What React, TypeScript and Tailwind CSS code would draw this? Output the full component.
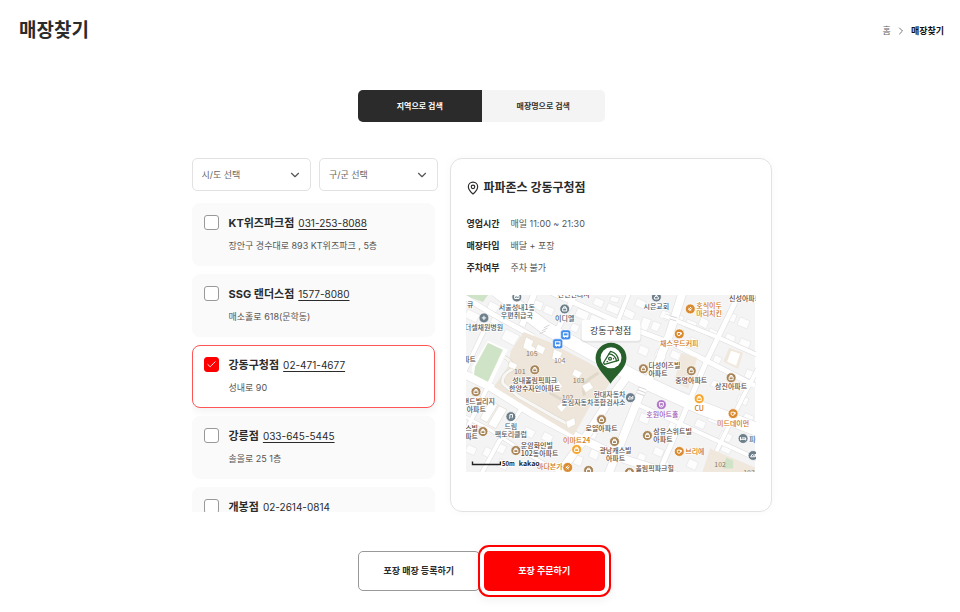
import { useState } from 'react';
import { Check, ChevronDown, ChevronRight, MapPin } from 'lucide-react';

interface Store {
  name: string;
  phone: string;
  address: string;
}

interface Place {
  x: number;
  y: number;
  lines: string[];
  color: string;
  anchor?: 'start' | 'middle' | 'end';
}

interface Poi {
  x: number;
  y: number;
  kind: 'apt' | 'cafe' | 'food' | 'plus' | 'mail' | 'note' | 'church' | 'car' | 'face' | 'bed';
  color: string;
}

const stores: Store[] = [
  { name: 'KT위즈파크점', phone: '031-253-8088', address: '장안구 경수대로 893 KT위즈파크 , 5층' },
  { name: 'SSG 랜더스점', phone: '1577-8080', address: '매소홀로 618(문학동)' },
  { name: '강동구청점', phone: '02-471-4677', address: '성내로 90' },
  { name: '강릉점', phone: '033-645-5445', address: '솔올로 25 1층' },
  { name: '개봉점', phone: '02-2614-0814', address: '개봉로 23길 10' },
];

const details = [
  ['영업시간', '매일 11:00 ~ 21:30'],
  ['매장타입', '배달 + 포장'],
  ['주차여부', '주차 불가'],
];

const brown = '#5a4a42';
const slate = '#4d5b66';
const orange = '#cf7412';
const sand = '#a88558';
const steel = '#6d7f8b';

const places: Place[] = [
  { x: 1, y: 12, lines: ['큐'], color: slate, anchor: 'start' },
  { x: 51, y: 15, lines: ['서울성내1동', '우편취급국'], color: slate },
  { x: 18, y: 35, lines: ['더셀채원병원'], color: slate },
  { x: 108, y: 2, lines: ['천년연리지'], color: brown },
  { x: 99, y: 26, lines: ['이디엘'], color: slate },
  { x: 10, y: 67, lines: ['아파트'], color: brown, anchor: 'end' },
  { x: 69, y: 88, lines: ['성내올림픽파크', '한양수자인아파트'], color: brown },
  { x: 191, y: 14, lines: ['시은교회'], color: slate },
  { x: 231, y: 13, lines: ['호식이두', '마리치킨'], color: orange, anchor: 'start' },
  { x: 264, y: 6, lines: ['신성아파트'], color: brown, anchor: 'start' },
  { x: 214, y: 51, lines: ['채스우드커피'], color: orange },
  { x: 183, y: 73, lines: ['다성이즈빌', '아파트'], color: brown, anchor: 'start' },
  { x: 226, y: 88, lines: ['중명아파트'], color: brown },
  { x: 266, y: 94, lines: ['삼진아파트'], color: brown },
  { x: 160, y: 102, lines: ['현대자동차', '동심자동차종합검사소'], color: slate, anchor: 'end' },
  { x: 29, y: 109, lines: ['랜드빌리지'], color: brown, anchor: 'end' },
  { x: 20, y: 117, lines: ['아파트'], color: brown, anchor: 'end' },
  { x: 45, y: 134, lines: ['드림', '팩토리클럽'], color: slate },
  { x: 12, y: 136, lines: ['캐스빌', '아파트'], color: brown, anchor: 'end' },
  { x: 55, y: 154, lines: ['운암화인빌', '102동아파트'], color: brown, anchor: 'start' },
  { x: 111, y: 148, lines: ['이마트24'], color: orange },
  { x: 97, y: 175, lines: ['바다본가'], color: orange, anchor: 'end' },
  { x: 136, y: 136, lines: ['로얄아파트'], color: brown },
  { x: 150, y: 159, lines: ['광남캐스빌', '아파트'], color: brown },
  { x: 197, y: 122, lines: ['호원아트홀'], color: '#9a55b5' },
  { x: 234, y: 116, lines: ['CU'], color: orange },
  { x: 268, y: 131, lines: ['미드데이먼'], color: orange },
  { x: 188, y: 139, lines: ['삼유스위트빌', '아파트'], color: brown, anchor: 'start' },
  { x: 220, y: 160, lines: ['브리에'], color: orange, anchor: 'start' },
  { x: 284, y: 147, lines: ['피아노'], color: slate, anchor: 'start' },
  { x: 170, y: 177, lines: ['올림픽파크힐'], color: brown, anchor: 'start' },
];

const blocks = [
  { x: 66, y: 61, label: '105' },
  { x: 94, y: 68, label: '104' },
  { x: 54, y: 79, label: '101' },
  { x: 113, y: 88, label: '103' },
  { x: 102, y: 105, label: '102' },
  { x: 255, y: 173, label: '102' },
  { x: 284, y: 181, label: '103' },
];

const pois: Poi[] = [
  { x: 51, y: 2, kind: 'mail', color: steel },
  { x: 18, y: 23, kind: 'plus', color: steel },
  { x: 99, y: 14, kind: 'apt', color: steel },
  { x: 191, y: 2, kind: 'church', color: steel },
  { x: 225, y: 14, kind: 'food', color: '#d98a30' },
  { x: 214, y: 39, kind: 'cafe', color: '#d98a30' },
  { x: 69, y: 75, kind: 'apt', color: sand },
  { x: 178, y: 74, kind: 'apt', color: sand },
  { x: 226, y: 76, kind: 'apt', color: sand },
  { x: 266, y: 83, kind: 'apt', color: sand },
  { x: 165, y: 103, kind: 'car', color: steel },
  { x: 10, y: 97, kind: 'apt', color: sand },
  { x: 45, y: 122, kind: 'note', color: steel },
  { x: 17, y: 137, kind: 'apt', color: sand },
  { x: 50, y: 156, kind: 'apt', color: sand },
  { x: 111, y: 155, kind: 'apt', color: '#f5a52c' },
  { x: 102, y: 173, kind: 'food', color: '#d98a30' },
  { x: 123, y: 176, kind: 'apt', color: sand },
  { x: 136, y: 125, kind: 'apt', color: sand },
  { x: 149, y: 147, kind: 'apt', color: sand },
  { x: 196, y: 110, kind: 'face', color: '#ad75c4' },
  { x: 234, y: 104, kind: 'apt', color: '#f5a52c' },
  { x: 268, y: 119, kind: 'cafe', color: '#d98a30' },
  { x: 182, y: 141, kind: 'apt', color: sand },
  { x: 214, y: 157, kind: 'cafe', color: '#d98a30' },
  { x: 278, y: 144, kind: 'bed', color: steel },
  { x: 288, y: 161, kind: 'car', color: steel },
  { x: 164, y: 178, kind: 'apt', color: sand },
];

const glyphs: Record<Poi['kind'], string> = {
  apt: 'M-2 -.8h4v2.8h-4zM-1 -.8v-1.4h2v1.4',
  cafe: 'M-2 -1.4h3.2v1.6a1.6 1.6 0 0 1 -3.2 0zM1.2 -1h1v1.2h-1',
  food: 'M-2 .8L.8 -2M-1 1.8L2 -.8M-1.8 -.8L1 1.8',
  plus: 'M0 -2.2v4.4M-2.2 0h4.4',
  mail: 'M-2.2 -1.5h4.4v3h-4.4zM-2.2 -1.5l2.2 1.8l2.2 -1.8',
  note: 'M-1 1.5v-3.4l2.6 -.4v3.2M-1.8 1.6h.8M.8 1.2h.8',
  church: 'M0 -2.6v2M-1 -1.8h2M-2 2v-1.8l2 -1.2l2 1.2v1.8z',
  car: 'M-2.4 1.4l1.8 -2.8l1.4 1.6l1.6 -1.6v2.6z',
  face: 'M-2 -2h4v2.4a2 2 0 0 1 -4 0zM-1 -.8h.1M.9 -.8h.1M-.8 .8h1.6',
  bed: 'M-2.6 -1.6v3.4M-2.6 .8h5.2v1M-1.2 -.6h3.8v1.4',
};

const buildings = [
  '2,14 14,20 10,28 -2,22', '24,6 34,11 30,18 21,13', '28,20 35,24 31,31 24,27', '40,34 54,41 48,51 35,44',
  '68,4 78,8 75,16 65,12', '80,10 89,14 86,21 77,17', '112,13 124,18 121,26 109,21', '126,19 137,24 134,32 123,27',
  '107,28 114,31 111,38 104,35', '130,2 139,6 136,13 127,9', '143,8 155,13 152,20 140,15', '160,13 170,18 167,25 157,20',
  '146,1 154,3 152,8 144,6', '172,3 181,7 178,14 169,10', '178,22 186,25 180,40 172,37', '188,26 196,29 192,37 185,34',
  '197,15 205,18 201,26 194,22', '210,18 219,22 216,29 207,25', '222,24 232,28 229,36 219,32', '238,8 247,12 244,18 235,14',
  '249,14 258,18 255,25 246,21', '262,16 272,20 269,28 259,24', '275,22 285,26 282,34 272,30', '236,22 244,26 241,34 233,30',
  '245,33 253,37 250,45 242,41', '226,42 235,46 232,54 223,50', '207,55 216,59 213,66 204,62', '192,54 200,58 197,65 189,61',
  '175,50 184,54 181,62 172,58', '262,38 271,42 268,49 259,45', '276,43 286,47 283,55 273,51', '250,60 257,63 254,70 247,67',
  '282,74 291,78 288,86 279,82', '248,85 257,89 254,95 245,91', '216,96 225,100 222,107 213,103', '246,118 256,122 252,130 242,126',
  '232,124 241,128 238,135 229,131', '257,136 268,141 264,148 253,144', '258,150 267,154 264,160 255,156',
  '218,132 226,136 223,143 215,139', '176,118 185,122 182,130 173,126', '205,126 212,129 209,137 202,134',
  '190,152 199,156 196,163 187,159', '196,165 204,168 201,176 193,172', '224,164 233,168 230,176 221,172',
  '174,158 181,161 178,169 171,165', '126,154 134,158 131,166 123,162', '124,136 132,139 129,145 121,142',
  '79,137 88,142 84,149 75,144', '72,165 80,169 77,176 69,172', '32,148 41,152 37,160 28,156', '20,152 28,156 24,164 16,160',
  '34,164 43,168 40,176 31,172', '60,132 70,137 66,144 57,139', '110,160 118,163 115,172 107,169', '2,150 11,154 8,161 -1,157',
  '274,100 284,104 281,111 271,107', '280,118 289,122 286,130 277,126', '136,108 144,112 141,119 133,115',
];

const towers = [
  '60,42 68,46 66,51 71,54 68,59 57,53', '72,49 80,53 77,60 69,56', '88,54 97,58 95,62 101,65 98,70 86,64',
  '44,66 52,70 49,75 42,72', '79,86 87,90 93,86 97,92 88,98 79,94', '109,74 117,78 113,84 106,80',
  '91,112 98,106 101,112 96,118', '100,127 109,123 110,130 102,134', '116,91 124,87 128,93 120,98',
];

const roads = [
  { d: 'M-5 0L28 20L68 42', w: 5 },
  { d: 'M30 -5L80 33L145 69L180 88L235 113L295 136', w: 13 },
  { d: 'M-5 78L24 92L67 119L117 145L160 165L220 184', w: 8 },
  { d: 'M197 60L174 101L142 182', w: 8 },
  { d: 'M163 80L147 101L117 147L91 182', w: 8 },
  { d: 'M218 -5L204 40L195 62', w: 8 },
  { d: 'M70 -5L56 31', w: 6 },
  { d: 'M112 -5L88 42', w: 5 },
  { d: 'M165 -5L145 45', w: 4 },
  { d: 'M80 -5L170 35L208 49L290 91', w: 5 },
  { d: 'M199 21L254 43L292 60', w: 4 },
  { d: 'M276 -5L241 67L192 182', w: 5 },
  { d: 'M295 70L277 104L239 182', w: 4 },
  { d: 'M168 108L219 131L295 166', w: 4 },
  { d: 'M-5 120L22 134L64 161L103 182', w: 3 },
  { d: 'M22 92L-5 146', w: 4 },
  { d: 'M57 112L33 147L14 182', w: 4 },
  { d: 'M18 36L-4 82', w: 4 },
];

function StoreMap() {
  return (
    <svg
      viewBox="0 0 290 178"
      role="img"
      aria-label="강동구청점 지도"
      className="block h-auto w-full font-['Noto_Sans_CJK_KR',sans-serif]"
    >
      <rect width="290" height="178" fill="#f4f4f5" />
      <path d="M0 0h22l-5 7l-17 -6z" fill="#cfe3c6" />
      <g fill="#fdfdfd" stroke="#e2e2e5" strokeWidth=".6">
        {buildings.map((p) => (
          <polygon key={p} points={p} />
        ))}
      </g>

      {/* road casing first, then the white fill over it */}
      <g fill="none" stroke="#dcdcdf" strokeLinejoin="round">
        {roads.map((r) => (
          <path key={r.d} d={r.d} strokeWidth={r.w + 1} />
        ))}
      </g>
      <g fill="none" stroke="#fff" strokeLinejoin="round">
        {roads.map((r) => (
          <path key={r.d} d={r.d} strokeWidth={r.w} />
        ))}
      </g>

      {/* apartment complex and park */}
      <path d="M58 37L83 47L125 69L147 83L139 97L127 107L108 141L68 117L28 92L42 72L45 56z" fill="#eee6da" />
      <path d="M38 62q9 4 8 13q-11 5 -9 14l16 13l35 20l17 9" fill="none" stroke="#d8d5d0" strokeWidth="4" />
      <path d="M38 62q9 4 8 13q-11 5 -9 14l16 13l35 20l17 9" fill="none" stroke="#f8f7f4" strokeWidth="3" />
      <path d="M119 101q-4 -10 5 -17l9 -6M84 98l12 7l19 4" fill="none" stroke="#e0d8ca" strokeWidth="3" />
      <g fill="#fff" stroke="#e1d8ca" strokeWidth=".6">
        {towers.map((p) => (
          <polygon key={p} points={p} />
        ))}
      </g>
      <path d="M6 72L22 46L42 55L24 91L7 83z" fill="#fff" />
      <path d="M9 72L22 48L37 55L22 87L8 80z" fill="#cfe3c6" />
      <path d="M216 58L232 63L223 94L209 87z" fill="#f0e8dc" />
      <path d="M264 53L278 58L273 74L258 67z" fill="#f0e8dc" />
      <path d="M266 56l9 3l-4 12l-9 -4z" fill="#fff" />
      <path d="M245 154L290 173V178H237z" fill="#f0e8dc" />
      <path d="M261 163l7 3v8h-10z" fill="#cfe3c6" />
      <path d="M33 111l8 4l-11 19l-8 -4zM24 105l8 5l-11 18l-7 -4z" fill="#fff" stroke="#dcd5ca" strokeWidth=".6" />
      <path d="M78 33l6 -3M76 36l6 -3M74 39l6 -3M204 24l7 2M205 21l7 2M173 92l8 3M172 95l8 3M171 98l8 3" stroke="#d6d6da" strokeWidth="1" />

      <g textAnchor="middle" fill="#8b7a67" fontSize="7">
        {blocks.map((b) => (
          <text key={`${b.label}-${b.x}`} x={b.x} y={b.y}>
            {b.label}
          </text>
        ))}
      </g>

      {pois.map((p) => (
        <g key={`${p.x}-${p.y}`} transform={`translate(${p.x} ${p.y})`}>
          <circle r="5" fill={p.color} stroke="#fff" strokeWidth=".8" />
          <path d={glyphs[p.kind]} fill="none" stroke="#fff" strokeWidth="1" strokeLinejoin="round" />
        </g>
      ))}

      {/* bus stops */}
      {[[100, 40], [92, 49]].map(([x, y]) => (
        <g key={x} transform={`translate(${x} ${y})`}>
          <rect x="-5" y="-5" width="10" height="10" rx="2.5" fill="#3f8cec" stroke="#fff" strokeWidth=".6" />
          <path d="M-2.8 -2.6h5.6v4.8h-5.6zM-1.8 2.2h.8v1h-.8zM1 2.2h.8v1h-.8z" fill="#fff" />
          <path d="M-1.8 -1.5h3.6v2h-3.6z" fill="#3f8cec" />
        </g>
      ))}

      <g fontSize="7" fontWeight="500" stroke="#fff" strokeWidth="1.4" strokeLinejoin="round" paintOrder="stroke">
        {places.map((p) => (
          <text key={`${p.x}-${p.y}`} textAnchor={p.anchor ?? 'middle'} fill={p.color}>
            {p.lines.map((line, i) => (
              <tspan key={line} x={p.x} y={p.y + i * 8}>
                {line}
              </tspan>
            ))}
          </text>
        ))}
        <text x="36" y="172" fill="#222" fontWeight="700" fontSize="6">50m</text>
        <text x="53" y="172" fill="#222" fontWeight="700">kakao</text>
      </g>
      <path d="M6.500 167v3h28v-3" fill="none" stroke="#222" strokeWidth="1.4" />

      {/* selected store */}
      <path d="M145 89C141 82 130 74 130 63.500A15.500 15.500 0 0 1 161 63.500C161 74 149 82 145 89z" fill="#28602b" />
      <circle cx="145.500" cy="63" r="10.500" fill="#fff" />
      <g fill="none" stroke="#28602b" strokeWidth="1.300" strokeLinejoin="round" strokeLinecap="round">
        <path d="M138 68L145 56.500Q152 58 153 65.500L139 69.500z" />
        <path d="M143.500 59q6.500 1 7.500 7" />
        <circle cx="144.500" cy="64" r="1.400" />
        <path d="M148 63.500v.5M141.500 67l.5 -.3" />
      </g>
      <rect x="115" y="26" width="61" height="22" rx="4" fill="#000" opacity=".06" />
      <rect x="116" y="25" width="59" height="21" rx="3" fill="#fff" />
      <text x="145" y="39" textAnchor="middle" fontSize="9" fill="#333">
        강동구청점
      </text>
    </svg>
  );
}

function RegionSelect({ id, label }: { id: string; label: string }) {
  return (
    <div className="relative">
      <select
        id={id}
        aria-label={label}
        className="h-[33px] w-full appearance-none rounded-[5px] border border-[#e2e2e2] bg-white pr-7 pl-[9px] text-[9px] text-[#666]"
      >
        <option>{label}</option>
      </select>
      <ChevronDown className="pointer-events-none absolute top-[10px] right-[9px] size-[14px] text-[#555]" strokeWidth={2} />
    </div>
  );
}

export default function App() {
  const [tab, setTab] = useState('지역으로 검색');
  const [selected, setSelected] = useState('강동구청점');

  return (
    <div className="bg-white pr-4 pl-[19px] font-['Inter','Noto_Sans_CJK_KR',sans-serif] text-[#2b2b2b]">
      <header className="flex h-[60px] items-center justify-between pt-[2px]">
        <h1 className="text-[19px] font-bold">매장찾기</h1>
        <nav className="flex items-center gap-1 text-[9px]">
          <a href="#home" className="text-[#666]">홈</a>
          <ChevronRight className="size-3 text-[#777]" strokeWidth={2} />
          <span className="font-bold text-[#111]">매장찾기</span>
        </nav>
      </header>

      <main className="mx-auto max-w-[580px] pt-[30px]">
        <div className="mx-auto grid max-w-[247px] grid-cols-2 overflow-hidden rounded-[5px]">
          {['지역으로 검색', '매장명으로 검색'].map((name) => (
            <button
              key={name}
              onClick={() => setTab(name)}
              className={`h-8 cursor-pointer text-[8px] font-bold ${
                tab === name ? 'bg-[#2b2b2b] text-white' : 'bg-[#f4f4f4] text-[#333]'
              }`}
            >
              {name}
            </button>
          ))}
        </div>

        <div className="mt-9 grid grid-cols-[10fr_13fr] gap-3">
          <section>
            <div className="grid grid-cols-2 gap-2">
              <RegionSelect id="sido" label="시/도 선택" />
              <RegionSelect id="gugun" label="구/군 선택" />
            </div>

            <ul className="mt-3 flex max-h-[309px] flex-col gap-2 overflow-y-auto pr-[3px] [scrollbar-width:none]">
              {stores.map((store) => {
                const on = selected === store.name;
                return (
                  <li
                    key={store.name}
                    className={`flex shrink-0 gap-[10px] rounded-lg border px-[11px] py-2 leading-[22px] ${
                      on ? 'border-[#ff5555] bg-white shadow-[0_3px_8px_rgba(0,0,0,0.06)]' : 'border-[#fafafa] bg-[#fafafa]'
                    }`}
                  >
                    <span className="relative mt-[3px] size-[15px] shrink-0">
                      <input
                        type="checkbox"
                        id={store.phone}
                        checked={on}
                        onChange={() => setSelected(store.name)}
                        className="block size-[15px] appearance-none rounded-[3px] border border-[#999] bg-white checked:border-[#f00] checked:bg-[#f00]"
                      />
                      {on && (
                        <Check className="pointer-events-none absolute inset-[2px] size-[11px] text-white" strokeWidth={2} />
                      )}
                    </span>
                    <div>
                      <div className="flex items-center gap-1">
                        <label htmlFor={store.phone} className="text-[11px] font-bold">
                          {store.name}
                        </label>
                        <a href={`tel:${store.phone}`} className="text-[10px] underline underline-offset-2">
                          {store.phone}
                        </a>
                      </div>
                      <p className="mt-px text-[9px] text-[#555]">{store.address}</p>
                    </div>
                  </li>
                );
              })}
            </ul>
          </section>

          <section className="rounded-xl border border-[#e2e2e2] px-[15px] pt-[17px] pb-[37px] shadow-[0_0_8px_rgba(0,0,0,0.03)]">
            <h2 className="flex items-center gap-[3px] text-[12px] leading-6 font-bold">
              <MapPin className="size-[14px]" strokeWidth={2} />
              파파존스 강동구청점
            </h2>
            <dl className="mt-[13px] text-[9px] leading-[22px]">
              {details.map(([term, value]) => (
                <div key={term} className="flex">
                  <dt className="w-11 font-bold">{term}</dt>
                  <dd className="text-[#555]">{value}</dd>
                </div>
              ))}
            </dl>
            <div className="mt-4">
              <StoreMap />
            </div>
          </section>
        </div>

        <div className="mx-auto mt-[39px] grid max-w-[247px] grid-cols-2 gap-1 pb-5">
          <button className="h-10 cursor-pointer rounded-[5px] border border-[#999] bg-white text-[9px] font-bold">
            포장 매장 등록하기
          </button>
          <button className="h-10 cursor-pointer rounded-[5px] bg-[#f00] text-[9px] font-bold text-white shadow-[0_0_0_4px_#fff,0_2px_10px_7px_rgba(0,0,0,0.06)] outline-2 outline-offset-4 outline-[#f00]">
            포장 주문하기
          </button>
        </div>
      </main>
    </div>
  );
}
